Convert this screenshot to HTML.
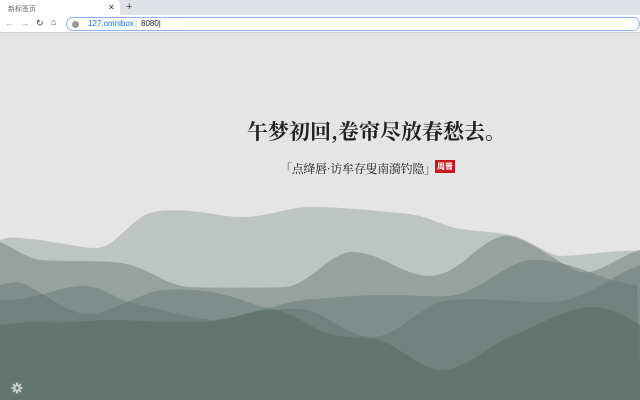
<!DOCTYPE html>
<html><head><meta charset="utf-8"><style>
*{margin:0;padding:0;box-sizing:border-box}
body{width:640px;height:400px;overflow:hidden;background:#e5e5e5;font-family:"Liberation Sans","Noto Sans CJK SC",sans-serif;position:relative}
.tabs{position:absolute;top:0;left:0;width:640px;height:15px;background:#dee1e6}
.tab{position:absolute;left:0;top:0;width:120px;height:15px;background:#fff;border-radius:0 4px 0 0}
.bar{position:absolute;top:15px;left:0;width:640px;height:18px;background:#fff;border-bottom:1px solid #d0d0d0}
.omni{position:absolute;left:66px;top:2px;width:574px;height:14px;border:1px solid #8ab4f8;border-radius:8px;background:#fff}
.t{position:absolute;font-size:7px;color:#555}
.title{position:absolute;left:247px;top:116px;font-size:21px;font-family:"Noto Serif CJK SC","Noto Sans CJK SC",serif;font-weight:bold;color:#222;white-space:nowrap}
.sub{position:absolute;left:280px;top:160px;font-size:12px;font-family:"Noto Serif CJK SC",serif;color:#222;white-space:nowrap;letter-spacing:-0.3px}
.stamp{position:absolute;left:435px;top:160px;width:20px;height:13px;background:#c8161d;color:#fff;font-size:8px;text-align:center;line-height:13px;font-weight:bold}
</style></head><body>
<div class="tabs"><div class="tab"></div>
<div class="t" style="left:8px;top:4px;color:#666">新标签页</div>
<div class="t" style="left:108px;top:3px;font-size:8px;color:#333">✕</div>
<div class="t" style="left:126px;top:1px;font-size:11px;color:#444">+</div></div>
<div class="bar">
<div class="t" style="left:5px;top:3px;font-size:9px;color:#999">←</div>
<div class="t" style="left:20px;top:3px;font-size:9px;color:#999">→</div>
<div class="t" style="left:36px;top:3px;font-size:9px;color:#444">↻</div>
<div class="t" style="left:51px;top:2px;font-size:9px;color:#444">⌂</div>
<div class="omni"><div style="position:absolute;left:5px;top:3px;width:7px;height:7px;border-radius:50%;background:#999"></div>
<div class="t" style="left:21px;top:1px;font-size:8px;color:#1a73e8">127.omnibox</div>
<div class="t" style="left:68px;top:1px;font-size:8px;color:#bbb">|</div>
<div class="t" style="left:74px;top:1px;font-size:8px;color:#222">8080|</div></div></div>
<div class="title">午梦初回,卷帘尽放春愁去。</div>
<div class="sub">「点绛唇·访牟存叟南漪钓隐」</div>
<div class="stamp">周晋</div>
<svg style="position:absolute;left:0;top:0" width="640" height="400">
<path fill="#bec4c1" d="M0,240 C5,238 12,237 20,238 C50,240 80,248 94,248 C102,248 106,246 112,242 C130,228 140,212 160,211 C200,208 220,218 245,217 C270,216 290,207 310,207 C350,207 380,212 400,213 C430,215 440,226 461,229 C480,232 500,232 515,236 C535,243 545,253 560,256 C590,255 610,250 640,251 L640,400 L0,400Z"/>
<path fill="rgb(93,113,108)" fill-opacity="0.4" d="M0,242 C15,248 25,258 41,260 C70,262 100,260 122,263 C150,268 165,285 188,287 C220,288 260,288 286,287 C310,284 330,253 351,252 C380,251 400,275 429,276 C460,276 480,238 505,236 C525,235 555,262 580,272 C600,275 620,255 640,250 L640,400 L0,400Z"/>
<path fill="rgb(93,113,108)" fill-opacity="0.4" d="M0,285 C8,283 16,281 22,283 C40,290 65,312 85,314 C110,315 140,292 163,290 C195,288 215,292 229,296 C245,300 255,306 269,308 C285,304 295,300 315,299 C340,297 360,295 384,295 C410,295 430,297 449,296 C480,293 505,262 531,260 C570,258 605,283 637,285 L640,400 L0,400Z"/>
<path fill="rgb(93,113,108)" fill-opacity="0.4" d="M0,300 C30,302 60,286 82,286 C105,286 115,300 135,304 C165,310 190,318 212,320 C235,318 250,312 269,310 C290,308 300,308 312,311 C330,318 350,336 370,337 C400,338 420,303 449,300 C490,297 520,303 551,302 C590,300 610,275 640,265 L640,400 L0,400Z"/>
<path fill="rgb(93,113,108)" fill-opacity="0.75" d="M0,325 C15,323 30,321 45,322 C70,324 95,319 122,320 C150,321 180,323 204,322 C235,320 250,310 270,309 C295,312 310,328 327,333 C345,338 360,337 376,339 C400,345 420,370 441,370 C465,370 490,345 510,337 C540,325 565,308 592,307 C615,308 628,318 640,325 L640,400 L0,400Z"/>
<g transform="translate(17,388)" fill="#c9ceca">
<circle r="3.6"/><g stroke="#c9ceca" stroke-width="2"><line x1="0" y1="-5.5" x2="0" y2="5.5"/><line x1="-5.5" y1="0" x2="5.5" y2="0"/><line x1="-3.9" y1="-3.9" x2="3.9" y2="3.9"/><line x1="-3.9" y1="3.9" x2="3.9" y2="-3.9"/></g>
<circle r="1.5" fill="#5d716c"/></g>
</svg>
</body></html>
